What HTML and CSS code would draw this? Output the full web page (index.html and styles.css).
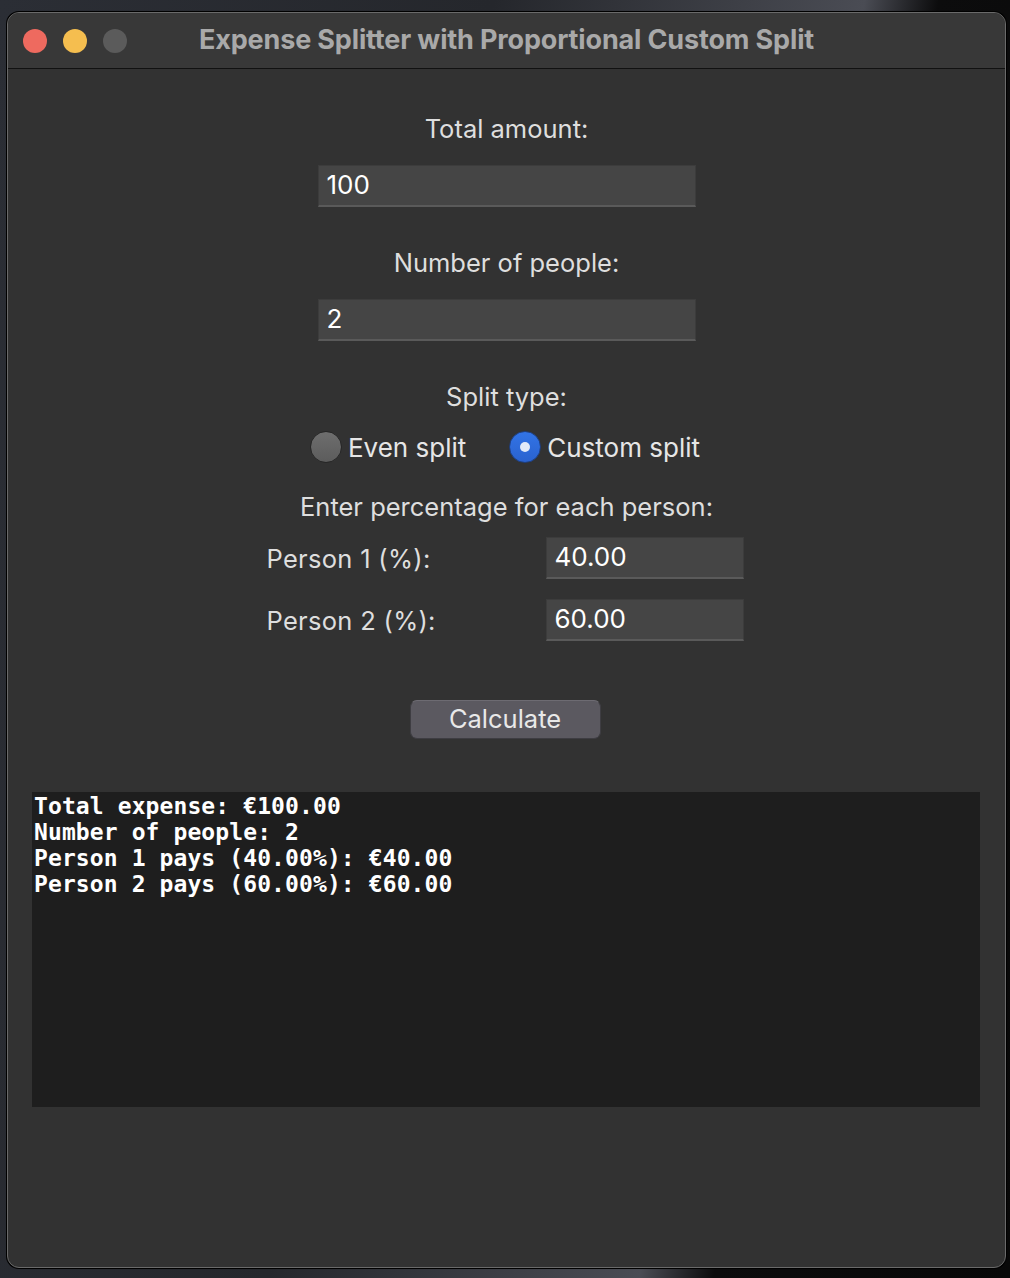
FILE: index.html
```html
<!DOCTYPE html>
<html>
<head>
<meta charset="utf-8">
<link rel="stylesheet" href="styles.css">
</head>
<body>
<div class="window">
  <div class="titlebar">
    <div class="lights">
      <span class="light red"></span>
      <span class="light yellow"></span>
      <span class="light gray"></span>
    </div>
    <div class="title">Expense Splitter with Proportional Custom Split</div>
  </div>
  <div class="content">
    <div class="label l-total">Total amount:</div>
    <div class="entry wide">100</div>
    <div class="label l-people">Number of people:</div>
    <div class="entry wide">2</div>
    <div class="label l-split">Split type:</div>
    <div class="radios">
      <div class="radio"><span class="dot off"></span><span>Even split</span></div>
      <div class="radio"><span class="dot on"></span><span>Custom split</span></div>
    </div>
    <div class="label l-enter">Enter percentage for each person:</div>
    <div class="persons">
      <div class="prow">
        <span class="plabel">Person 1 (%):</span>
        <div class="entry small">40.00</div>
      </div>
      <div class="prow">
        <span class="plabel">Person 2 (%):</span>
        <div class="entry small">60.00</div>
      </div>
    </div>
    <div class="button">Calculate</div>
    <pre class="output">Total expense: €100.00
Number of people: 2
Person 1 pays (40.00%): €40.00
Person 2 pays (60.00%): €60.00</pre>
  </div>
</div>
</body>
</html>
```
FILE: styles.css
```css
* { box-sizing: border-box; }
html, body { margin: 0; padding: 0; }
body {
  width: 1010px;
  height: 1278px;
  overflow: hidden;
  background: linear-gradient(100deg, #2b2e35 0%, #25272c 40%, #4a4c54 70%, #0c0c0d 76%, #080808 100%);
  font-family: "Inter", "Noto Sans", sans-serif;
  padding-top: 12px;
  padding-left: 7px;
}
.window {
  width: 999px;
  height: 1256px;
  background: #323232;
  border-radius: 12px;
  border: 1px solid #6a6a6a;
  box-shadow: 0 0 0 1px #000;
  overflow: hidden;
  display: flex;
  flex-direction: column;
}
.titlebar {
  height: 56px;
  flex: none;
  background: #383838;
  border-bottom: 1px solid #111;
  display: flex;
  align-items: center;
  position: relative;
}
.lights {
  display: flex;
  gap: 16px;
  padding-left: 15px;
}
.light {
  width: 24px;
  height: 24px;
  border-radius: 50%;
  display: block;
}
.red { background: #ee6a5f; }
.yellow { background: #f5be4f; }
.gray { background: #5b5b5b; }
.title {
  position: absolute;
  left: 0;
  right: 0;
  top: 0;
  height: 54px;
  line-height: 54px;
  text-align: center;
  font-weight: 700;
  font-size: 27px;
  color: #a9a9a9;
  letter-spacing: -0.15px;
}
.content {
  display: flex;
  flex-direction: column;
  align-items: center;
  padding-top: 45px;
}
.label {
  font-size: 25.5px;
  line-height: 30px;
  height: 30px;
  color: #dedede;
}
.l-people, .l-split { margin-top: 41px; }
.l-enter { margin-top: 29px; }
.entry {
  height: 42px;
  background: #454545;
  border: 1px solid #3c3c3c;
  border-bottom: 2px solid #5a5a5a;
  color: #ffffff;
  font-size: 26px;
  line-height: 38px;
  padding-left: 8px;
}
.wide {
  width: 378px;
  margin-top: 21px;
}
.radios {
  display: flex;
  gap: 43px;
  margin-top: 19px;
  height: 32px;
  align-items: center;
  font-size: 26px;
  color: #e6e6e6;
  padding-right: 3px;
}
.radio {
  display: flex;
  align-items: center;
  gap: 6px;
}
.dot {
  width: 32px;
  height: 32px;
  border-radius: 50%;
  display: block;
  position: relative;
}
.dot.off {
  background: linear-gradient(#6e6e6e, #5c5c5c);
  border: 1px solid #262626;
}
.dot.on {
  background: linear-gradient(#3274e6, #2a62cf);
  border: 1px solid #1e3f80;
}
.dot.on::after {
  content: "";
  position: absolute;
  left: 10px;
  top: 10px;
  width: 10px;
  height: 10px;
  border-radius: 50%;
  background: #e2eaf8;
}
.persons {
  margin-top: 15px;
  display: flex;
  flex-direction: column;
  gap: 20px;
  width: 477px;
  margin-right: 3px;
}
.prow {
  display: flex;
  justify-content: space-between;
  align-items: center;
}
.plabel {
  font-size: 25.5px;
  letter-spacing: 0.3px;
  color: #dedede;
}
.small {
  width: 198px;
}
.button {
  margin-top: 59px;
  width: 191px;
  height: 39px;
  border-radius: 7px;
  background: #5b5960;
  border: 1px solid #3e3d42;
  border-top-color: #6d6b72;
  color: #e8e8e8;
  font-size: 25.5px;
  line-height: 36px;
  text-align: center;
  margin-right: 3px;
}
.output {
  margin: 53px 0 0 0;
  width: 948px;
  height: 315px;
  background: #1e1e1e;
  color: #ffffff;
  font-family: "DejaVu Sans Mono", "Liberation Mono", monospace;
  font-weight: 700;
  font-size: 23px;
  line-height: 26px;
  padding: 1px 2px;
  margin-right: 1px;
  letter-spacing: 0.1px;
}
```
